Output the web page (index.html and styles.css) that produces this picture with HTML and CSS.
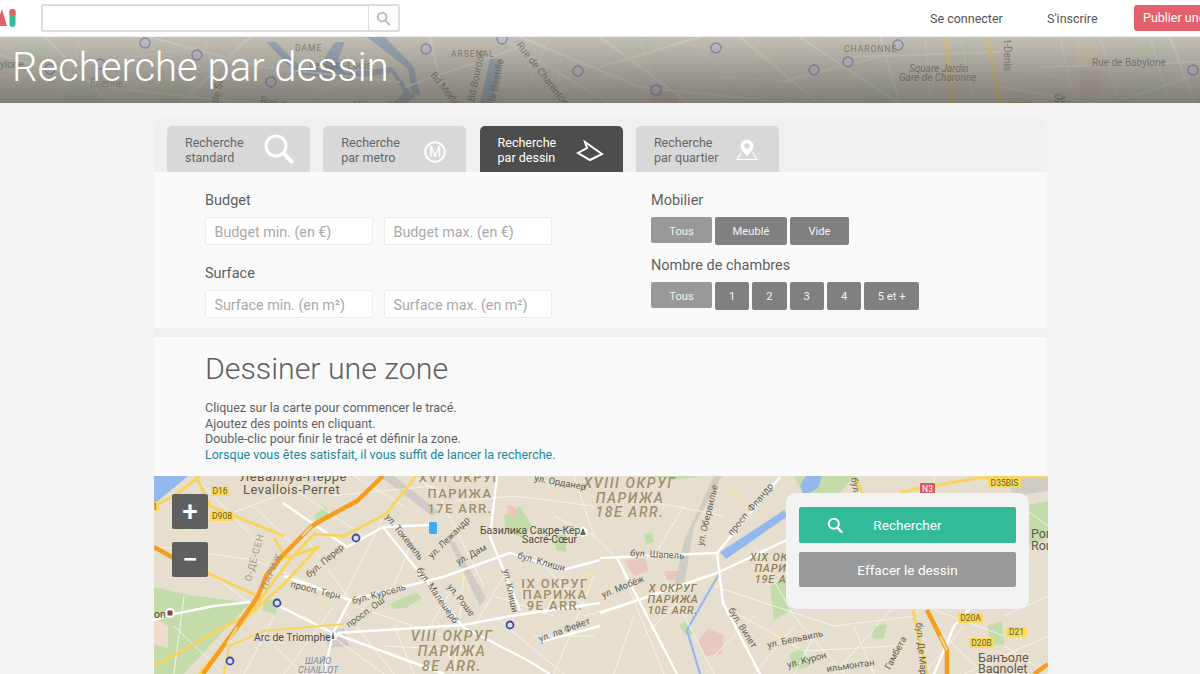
FILE: index.html
```html
<!DOCTYPE html>
<html lang="fr">
<head>
<meta charset="utf-8">
<title>Recherche par dessin</title>
<link rel="stylesheet" href="styles.css">
</head>
<body>
<header class="topbar">
  <div class="logo">
    <svg class="logo-svg" viewBox="0 0 16 36" width="16" height="36">
      <polygon class="logo-red" points="-4,26 2,9 7,26"/>
      <rect class="logo-green" x="9.5" y="9" width="6" height="18" rx="3"/>
      <path class="logo-red" d="M9.5 15v-3a3 3 0 0 1 6 0v3z"/>
    </svg>
  </div>
  <div class="searchbox">
    <div class="searchbox-field"></div>
    <div class="searchbox-btn">
      <svg viewBox="0 0 16 16" width="15" height="15"><circle class="ico-grey" cx="6.5" cy="6.5" r="4.6"/><line class="ico-grey" x1="10" y1="10" x2="14" y2="14.5"/></svg>
    </div>
  </div>
  <nav class="topnav">
    <a class="toplink link-login">Se connecter</a>
    <a class="toplink link-signup">S'inscrire</a>
    <a class="publish">Publier une annonce</a>
  </nav>
</header>

<section class="banner">
  <svg class="banner-map" viewBox="0 0 1200 67" width="1200" height="67" preserveAspectRatio="none">
    <rect width="1200" height="67" fill="#dcd7cb"/>
    <g fill="#d2dac4">
      <rect x="20" y="5" width="26" height="18"/><rect x="65" y="38" width="30" height="25"/><rect x="160" y="45" width="28" height="20"/>
      <rect x="1135" y="40" width="26" height="18"/><rect x="1140" y="5" width="24" height="14"/><rect x="870" y="40" width="34" height="27"/>
      <rect x="635" y="0" width="14" height="22"/><rect x="955" y="5" width="14" height="18"/>
    </g>
    <g fill="#e3dac4">
      <rect x="625" y="15" width="20" height="16"/><rect x="755" y="15" width="20" height="10"/><rect x="1075" y="5" width="22" height="22"/><rect x="1080" y="33" width="20" height="26" fill="#dccdc0"/>
      <rect x="650" y="48" width="28" height="19" fill="#dccdc0"/>
    </g>
    <path fill="#a9b7ca" d="M276 5 L300 30 L325 33 L325 20 L335 5 L345 5 L338 22 L345 36 L392 30 L410 55 L415 60 L404 67 L393 67 L404 55 L392 36 L345 42 L322 40 L296 36 L266 5 Z"/>
    <path fill="#a9b7ca" d="M367 0 L385 0 L414 30 L420 58 L412 58 L408 32 Z"/>
    <path fill="#a9b7ca" d="M490 22 L502 22 L492 67 L480 67 Z"/>
    <g class="bm-road">
      <path d="M0 18 L120 52 L260 67"/><path d="M150 0 L260 30 L400 45"/><path d="M45 0 L110 67"/><path d="M250 0 L180 67"/>
      <path d="M430 0 L445 67"/><path d="M500 0 L610 67"/><path d="M520 0 L640 50 L800 67"/><path d="M600 30 L700 0"/><path d="M600 0 L690 67"/>
      <path d="M740 0 L820 67"/><path d="M800 0 L900 67"/><path d="M780 45 L880 20"/><path d="M850 20 L1000 15"/><path d="M1040 30 L1200 25"/>
      <path d="M1170 0 L1195 67"/><path d="M1190 40 L1110 67"/><path d="M880 0 L900 67"/><path d="M1000 50 L1100 67"/><path d="M405 50 L520 10"/>
    </g>
    <g class="bm-thin">
      <path d="M0 40 L200 10"/><path d="M80 0 L60 67"/><path d="M205 0 L220 67"/><path d="M340 45 L300 67"/><path d="M550 0 L520 67"/><path d="M560 20 L560 67"/>
      <path d="M640 0 L660 67"/><path d="M700 15 L760 67"/><path d="M925 0 L930 67"/><path d="M960 0 L975 67"/><path d="M1000 30 L1060 40"/>
      <path d="M1060 0 L1075 67"/><path d="M1100 0 L1120 67"/><path d="M1150 0 L1170 67"/><path d="M720 40 L800 45"/>
    </g>
    <path class="bm-yellow" d="M946 0 L952 67"/><path class="bm-yellow" d="M987 0 L1000 67"/>
    <g class="bm-metro">
      <circle cx="145" cy="6" r="5"/><circle cx="197" cy="18" r="5"/><circle cx="100" cy="27" r="5"/><circle cx="50" cy="32" r="5"/><circle cx="271" cy="45" r="5"/>
      <circle cx="426" cy="12" r="5"/><circle cx="578" cy="34" r="5"/><circle cx="502" cy="2" r="5"/><circle cx="716" cy="11" r="5"/><circle cx="848" cy="25" r="5"/>
      <circle cx="814" cy="33" r="5"/><circle cx="656" cy="53" r="5"/><circle cx="898" cy="8" r="5"/><circle cx="1193" cy="33" r="5"/><circle cx="1140" cy="77" r="5"/>
    </g>
    <g class="bm-label">
      <text x="295" y="14" class="bm-caps">DAME</text>
      <text x="309" y="32">Île Saint-Louis</text>
      <text x="451" y="20" class="bm-caps">ARSENAL</text>
      <text x="354" y="72">Université</text>
      <text x="0" y="31">ylone</text>
      <text x="90" y="50" class="bm-faded">Étienne</text>
      <text transform="translate(430 38) rotate(52)">Bd Morland</text>
      <text transform="translate(474 65) rotate(-78)">Bd Bourdon</text>
      <text transform="translate(495 65) rotate(-78)">la Bastille</text>
      <text transform="translate(516 8) rotate(52)">Rue de Charenton</text>
      <text transform="translate(260 66) rotate(12)">Rue de</text>
      <text transform="translate(218 66) rotate(-78)">de Sa</text>
      <text x="844" y="15" class="bm-caps">CHARONNE</text>
      <text x="909" y="35" font-style="italic">Square Jardin</text>
      <text x="899" y="44" font-style="italic">Gare de Charonne</text>
      <text x="1092" y="29">Rue de Babylone</text>
      <text x="1054" y="65">Se</text>
      <text transform="translate(1004 3) rotate(90)">t-Denis</text>
      <rect x="1010" y="65" width="22" height="2" fill="#d6b850"/>
    </g>
  </svg>
  <div class="banner-shade"></div>
  <h1 class="banner-title">Recherche par dessin</h1>
</section>

<main class="page">
  <div class="tabs">
    <div class="tab">
      <span class="tab-label">Recherche<br>standard</span>
      <svg class="tab-icon" viewBox="0 0 30 32" width="30" height="32"><circle class="ico-w3" cx="12" cy="13" r="10"/><line class="ico-w4" x1="20" y1="21" x2="27.5" y2="28.5"/></svg>
    </div>
    <div class="tab">
      <span class="tab-label">Recherche<br>par metro</span>
      <svg class="tab-icon tab-icon-metro" viewBox="0 0 24 24" width="24" height="24"><circle class="ico-w2" cx="12" cy="12" r="9.7"/><text class="metro-m" x="12" y="17" text-anchor="middle">M</text></svg>
    </div>
    <div class="tab tab-active">
      <span class="tab-label">Recherche<br>par dessin</span>
      <svg class="tab-icon tab-icon-draw" viewBox="0 0 30 24" width="30" height="24"><polygon class="ico-w2" points="10,3 27,15 15,21 3,14 12,9"/></svg>
    </div>
    <div class="tab">
      <span class="tab-label">Recherche<br>par quartier</span>
      <svg class="tab-icon tab-icon-pin" viewBox="0 0 24 24" width="24" height="24"><path class="ico-fill" fill-rule="evenodd" d="M12 1.5a6.5 6.5 0 0 1 6.5 6.5c0 3.7-4 7-6.5 10.5C9.500 15 5.500 11.700 5.500 8A6.500 6.500 0 0 1 12 1.500zM12 5.300a2.700 2.700 0 1 0 0 5.400a2.700 2.700 0 0 0 0-5.400z"/><path class="ico-w1" d="M6.500 14.500 L2 21.500 H22 L17.500 14.500"/></svg>
    </div>
  </div>

  <section class="filters">
    <div class="filter-col filter-left">
      <h3 class="filter-title">Budget</h3>
      <div class="input-row">
        <input class="field" placeholder="Budget min. (en €)">
        <input class="field" placeholder="Budget max. (en €)">
      </div>
      <h3 class="filter-title filter-title-2">Surface</h3>
      <div class="input-row">
        <input class="field" placeholder="Surface min. (en m²)">
        <input class="field" placeholder="Surface max. (en m²)">
      </div>
    </div>
    <div class="filter-col filter-right">
      <h3 class="filter-title">Mobilier</h3>
      <div class="btn-row">
        <span class="opt opt-on opt-wide">Tous</span>
        <span class="opt opt-meuble">Meublé</span>
        <span class="opt opt-vide">Vide</span>
      </div>
      <h3 class="filter-title filter-title-3">Nombre de chambres</h3>
      <div class="btn-row">
        <span class="opt opt-on opt-wide">Tous</span>
        <span class="opt opt-num">1</span>
        <span class="opt opt-num">2</span>
        <span class="opt opt-num">3</span>
        <span class="opt opt-num">4</span>
        <span class="opt opt-more">5 et +</span>
      </div>
    </div>
  </section>

  <section class="intro">
    <h2 class="intro-title">Dessiner une zone</h2>
    <p class="intro-text">Cliquez sur la carte pour commencer le tracé.<br>Ajoutez des points en cliquant.<br>Double-clic pour finir le tracé et définir la zone.<br><span class="intro-hl">Lorsque vous êtes satisfait, il vous suffit de lancer la recherche.</span></p>
  </section>

  <section class="map">
    <svg class="map-svg" viewBox="0 0 894 198" width="894" height="198">
      <rect width="894" height="198" fill="#e6dfd0"/>
      <!-- parks -->
      <g fill="#c4dcaa">
        <polygon points="0,111 30,118 96,127 60,165 30,198 0,198"/>
        <polygon points="236,128 262,116 268,122 252,132 240,133"/>
        <polygon points="350,40 366,30 378,50 368,62 352,55"/>
        <polygon points="110,125 125,122 122,138 108,135"/>
        <polygon points="495,0 548,0 520,4"/>
        <polygon points="616,110 635,100 650,125 620,145"/>
        <polygon points="640,0 700,0 680,24 650,18"/>
        <polygon points="870,30 894,25 894,62 872,70"/>
        <polygon points="525,150 530,145 541,158 533,160"/>
        <polygon points="720,150 733,148 730,163 718,162"/>
        <polygon points="635,178 648,172 655,190 640,195"/>
        <polygon points="833,150 848,145 850,168 838,170"/>
        <polygon points="400,60 412,58 412,76 402,74"/>
        <polygon points="160,40 172,30 176,42 164,48"/>
        <polygon points="490,58 498,56 500,66 492,68"/>
      </g>
      <polygon fill="#f0dccb" points="0,142 14,150 14,172 0,168"/>
      <polygon fill="#e8c8c0" points="555,152 570,160 568,178 551,180 544,165"/>
      <polygon fill="#e8c8c0" points="470,85 490,80 495,95 480,100"/>
      <polygon fill="#e8c8c0" points="510,95 525,95 525,104 512,104"/>
      <polygon fill="#e8c8c0" points="352,30 360,30 365,38 355,40"/>
      <g fill="#ede2bd">
        <rect x="26" y="50" width="10" height="7"/><rect x="306" y="98" width="8" height="9"/><rect x="165" y="125" width="8" height="7"/>
        <rect x="556" y="100" width="12" height="9"/><rect x="600" y="90" width="14" height="14"/><rect x="700" y="50" width="10" height="8"/>
        <rect x="730" y="120" width="12" height="10"/><rect x="430" y="110" width="8" height="6"/><rect x="576" y="14" width="10" height="7"/>
        <rect x="860" y="120" width="12" height="9"/><rect x="428" y="95" width="14" height="10"/><rect x="620" y="155" width="8" height="8"/>
      </g>
      <g fill="#cfccc6">
        <polygon points="226,0 240,0 285,36 278,40"/>
        <polygon points="294,64 300,66 332,122 326,130"/>
        <polygon points="530,65 560,0 568,0 540,50 530,110 520,112"/>
        <polygon points="170,158 190,152 195,170 175,172"/>
        <polygon points="850,0 894,0 894,15 860,20"/>
      </g>
      <!-- water -->
      <g fill="#94b8ee">
        <polygon points="0,0 34,0 10,20 0,28"/>
        <polygon points="566,76 630,34 634,40 572,83"/>
        <polygon points="652,0 668,0 664,12 650,20 646,10"/>
      </g>
      <path class="m-canal" d="M566 96 L533 154 L546 198"/>
      <!-- minor streets -->
      <g class="m-thin">
        <path d="M0 70 L100 84 L196 124"/><path d="M40 0 L96 58"/><path d="M70 40 L150 10 L190 0"/><path d="M120 0 L210 60"/><path d="M175 20 L280 10"/>
        <path d="M150 60 L196 124"/><path d="M230 40 L190 120"/><path d="M280 10 L330 110"/><path d="M300 25 L360 20 L440 30"/>
        <path d="M180 130 L130 198"/><path d="M190 135 L240 198"/><path d="M240 150 L260 198"/>
        <path d="M200 130 L290 160 L300 198"/><path d="M310 100 L300 198"/><path d="M340 140 L410 198"/><path d="M400 40 L440 60 L470 90"/><path d="M380 80 L440 140"/>
        <path d="M420 0 L440 60"/><path d="M450 20 L520 30 L570 40"/><path d="M430 140 L530 110"/><path d="M470 100 L510 198"/><path d="M530 30 L500 80"/>
        <path d="M560 110 L620 130 L680 150 L760 140"/><path d="M600 70 L640 140 L690 198"/><path d="M640 150 L600 198"/><path d="M700 150 L720 198"/>
        <path d="M740 130 L680 198"/><path d="M770 130 L850 160"/><path d="M810 150 L770 198"/><path d="M850 140 L894 120"/><path d="M850 170 L894 198"/>
        <path d="M570 130 L650 175 L740 170"/><path d="M780 25 L780 0"/><path d="M860 25 L894 50"/><path d="M20 150 L70 198"/><path d="M260 0 L290 20"/>
        <path d="M120 140 L90 198"/><path d="M60 100 L100 130"/><path d="M150 140 L230 198"/><path d="M340 120 L400 140"/><path d="M440 100 L400 198"/>
        <path d="M510 100 L560 198"/><path d="M380 160 L440 160"/><path d="M810 198 L894 160"/>
        <path d="M200 0 L250 30"/><path d="M100 30 L140 70"/><path d="M260 60 L240 110"/><path d="M300 110 L270 160"/><path d="M350 100 L320 150"/>
        <path d="M410 100 L390 140"/><path d="M230 170 L330 175"/><path d="M120 170 L150 198"/><path d="M480 140 L460 198"/><path d="M530 120 L490 160"/>
        <path d="M600 140 L560 180"/><path d="M660 160 L640 198"/><path d="M780 150 L830 198"/><path d="M30 120 L20 198"/>
      </g>
      <!-- main streets -->
      <g class="m-road">
        <path d="M129 27 L193 71 L229 51 L276 49"/>
        <path d="M196 124 L289 101 L356 77 L409 94 L446 84"/>
        <path d="M196 124 L179 157 L290 198"/>
        <path d="M119 127 L179 157"/>
        <path d="M183 157 L309 149 L363 139 L446 127"/>
        <path d="M0 144 L20 138 L60 130 L96 126"/>
        <path d="M179 157 L170 198"/>
        <path d="M229 51 L309 151 L373 184 L396 198"/>
        <path d="M343 0 L336 61 L366 134"/>
        <path d="M446 137 L563 97 L633 64"/>
        <path d="M446 82 L563 77"/>
        <path d="M563 77 L569 127 L606 198"/>
        <path d="M563 77 L626 1"/>
        <path d="M463 82 L523 198"/>
        <path d="M130 100 L196 124"/>
        <path d="M386 166 L446 150"/>
        <path d="M836 110 L800 150 L780 198"/>
      </g>
      <!-- yellow -->
      <g class="m-yellow">
        <path d="M42 0 L56 30 L130 60"/>
        <path d="M53 97 L106 121"/>
        <path d="M0 190 L100 135 L130 108 L165 70"/>
        <path d="M45 198 L90 145 L105 125 L135 85 L160 58 L190 60 L232 38 L262 0"/>
        <path d="M120 62 L132 82 L165 71"/>
        <path d="M746 16 L823 2 L894 0"/>
        <path d="M759 134 L773 198"/>
        <path d="M0 30 L20 20 L46 0"/>
        <path d="M700 0 L712 24"/>
      </g>
      <path class="m-yellow-thin" d="M70 198 L75 170 L110 155 L190 148"/>
      <!-- orange -->
      <g class="m-orange">
        <path d="M49 198 L83 151 L104 120 L112 100 L129 79 L158 50 L168 44 L203 25 L229 0"/>
        <path d="M773 134 L793 174 L793 198"/>
        <path d="M0 71 L25 85"/>
        <path d="M880 198 L894 188"/>
      </g>
      <path class="m-orange-in" d="M73 168 L83 151"/>
      <path class="m-orange-in" d="M148 60 L158 50"/>
      <path class="m-orange-in" d="M786 160 L793 174"/>
      <!-- metro -->
      <g class="m-metro">
        <circle cx="202" cy="62" r="3.500"/><circle cx="123" cy="127" r="3.500"/><circle cx="356" cy="149" r="3.500"/><circle cx="76" cy="185" r="3.500"/>
      </g>
      <rect x="275" y="46" width="8" height="12" rx="1.500" fill="#3fa9f5"/>
      <circle cx="429" cy="56" r="5" fill="#fff"/><path d="M429 52 l3 7 h-6z" fill="#6d6658"/>
      <circle cx="179" cy="160" r="4" fill="#fff"/><path d="M179 155 l1.500 8 h-3z" fill="#6d6658"/>
      <circle cx="16" cy="137" r="5" fill="#fff"/><rect x="13.500" y="134.500" width="5" height="5" fill="#7a4a3f"/>
      <!-- shields -->
      <g class="m-shield">
        <rect x="57" y="11" width="18" height="9" rx="1"/><rect x="56" y="35" width="24" height="10" rx="1"/><rect x="-3" y="26" width="8" height="9" rx="1"/>
        <rect x="834" y="2" width="33" height="10" rx="1"/><rect x="804" y="137" width="25" height="10" rx="1"/><rect x="852" y="151" width="21" height="10" rx="1"/><rect x="815" y="162" width="25" height="10" rx="1"/>
      </g>
      <rect x="766" y="7" width="15" height="11" rx="1" fill="#d9555f"/>
      <g class="m-shield-t">
        <text x="66" y="18.300" text-anchor="middle">D16</text><text x="68" y="43" text-anchor="middle">D908</text><text x="1" y="33.500" text-anchor="middle">1</text>
        <text x="850.500" y="10" text-anchor="middle">D35BIS</text><text x="816.500" y="145" text-anchor="middle">D20A</text><text x="862.500" y="159" text-anchor="middle">D21</text><text x="827.500" y="170" text-anchor="middle">D20B</text>
      </g>
      <text class="m-shield-w" x="773.500" y="15.800" text-anchor="middle">N3</text>
      <!-- arrondissements -->
      <g class="m-arr" text-anchor="middle">
        <text x="306" y="6">XVII ОКРУГ</text><text x="306" y="22">ПАРИЖА</text><text x="306" y="37">17E ARR.</text>
        <text x="401" y="112">IX ОКРУГ</text><text x="401" y="123">ПАРИЖА</text><text x="401" y="134">9E ARR.</text>
        <text class="m-arr-big" x="298" y="165">VIII ОКРУГ</text><text class="m-arr-big" x="298" y="180">ПАРИЖА</text><text class="m-arr-big" x="298" y="195">8E ARR.</text>
        <text class="m-arr-big" x="476" y="12">XVIII ОКРУГ</text><text class="m-arr-big" x="476" y="27">ПАРИЖА</text><text class="m-arr-big" x="476" y="41">18E ARR.</text>
        <text x="519" y="116" class="m-arr-sm">X ОКРУГ</text><text x="519" y="127" class="m-arr-sm">ПАРИЖА</text><text x="519" y="138" class="m-arr-sm">10E ARR.</text>
        <text x="626" y="85" class="m-arr-sm">XIX ОКРУГ</text><text x="626" y="96" class="m-arr-sm">ПАРИЖА</text><text x="626" y="107" class="m-arr-sm">19E ARR.</text>
      </g>
      <!-- place names -->
      <text class="m-city" x="86" y="5">Леваллуа-Перре</text>
      <text class="m-city" x="89" y="18">Levallois-Perret</text>
      <text class="m-place" x="326" y="58">Базилика Сакре-Кёр</text>
      <text class="m-place" x="368" y="67">Sacré-Cœur</text>
      <text class="m-place" x="100" y="165">Arc de Triomphe</text>
      <text class="m-place" x="0" y="142">on</text>
      <text class="m-city-s" x="824" y="186">Банъоле</text>
      <text class="m-city-s" x="824" y="197">Bagnolet</text>
      <text class="m-city-s" x="877" y="62">Por</text>
      <text class="m-city-s" x="877" y="74">Ron</text>
      <text class="m-blue" x="151" y="188">ШАЙО</text>
      <text class="m-blue" x="144" y="197">CHAILLOT</text>
      <text class="m-grey" transform="translate(97 106) rotate(-75)">О-ДЕ-СЕН</text>
      <text class="m-grey" transform="translate(112 114) rotate(-65)">ПАРИЖ</text>
      <!-- street names -->
      <g class="m-street">
        <text transform="translate(380 5) rotate(10)">ул. Орданер</text>
        <text transform="translate(231 41) rotate(52)">ул. Токевиль</text>
        <text transform="translate(278 83) rotate(-45)">ул. Лежандр</text>
        <text transform="translate(304 89) rotate(-28)">ул. Дам</text>
        <text transform="translate(363 82) rotate(16)">бул. Клиши</text>
        <text transform="translate(155 102) rotate(-40)">бул. Перер</text>
        <text transform="translate(136 111) rotate(14)">просп. Терн</text>
        <text transform="translate(199 128) rotate(-15)">бул. Курсель</text>
        <text transform="translate(262 94) rotate(55)">бул. Малешерб</text>
        <text transform="translate(293 111) rotate(52)">ул. Роше</text>
        <text transform="translate(349 94) rotate(78)">ул. Клиши</text>
        <text transform="translate(195 152) rotate(-36)">просп. Ош</text>
        <text transform="translate(386 166) rotate(-20)">ул. ла Фейет</text>
        <text transform="translate(549 70) rotate(-76)">ул. Обервилье</text>
        <text transform="translate(578 60) rotate(-50)">просп. Фландр</text>
        <text transform="translate(476 80) rotate(3)">бул. Шапель</text>
        <text transform="translate(449 122) rotate(-22)">ул. Мобёж</text>
        <text transform="translate(574 134) rotate(58)">бул. Вилет</text>
        <text transform="translate(614 172) rotate(-12)">ул. Бельвиль</text>
        <text transform="translate(634 192) rotate(-15)">ул. Курон</text>
        <text transform="translate(673 196) rotate(-8)">ильмонтан</text>
        <text transform="translate(736 194) rotate(-62)">Гамбета</text>
        <text transform="translate(762 147) rotate(85)">бул. Де Мар</text>
        <text transform="translate(697 2) rotate(80)">бул.</text>
      </g>
    </svg>
    <div class="zoom-ctl">
      <button class="zoom-btn">+</button>
      <button class="zoom-btn">−</button>
    </div>
    <div class="map-panel">
      <button class="cta cta-search">
        <svg class="cta-ico" viewBox="0 0 16 16" width="16" height="16"><circle class="ico-w2" cx="6.800" cy="6.800" r="5"/><line class="ico-w2b" x1="10.500" y1="10.500" x2="14.500" y2="15"/></svg>
        Rechercher
      </button>
      <button class="cta cta-clear">Effacer le dessin</button>
    </div>
  </section>
</main>
</body>
</html>
```

FILE: styles.css
```css
* { box-sizing: border-box; }
html, body { margin: 0; height: 100%; overflow: hidden; }
body { background: #f3f3f3; font-family: Roboto, "Liberation Sans", sans-serif; color: #666; }

/* top bar */
.topbar { display: flex; align-items: center; height: 36px; background: #fff; white-space: nowrap; }
.logo { width: 41px; height: 36px; flex: none; }
.logo-svg { display: block; }
.logo-red { fill: #e4606d; }
.logo-green { fill: #33bb98; }
.searchbox { display: flex; flex: none; width: 359px; height: 28px; border: 2px solid #dcdcdc; border-radius: 2px; background: #fff; }
.searchbox-field { flex: 1; }
.searchbox-btn { width: 30px; display: flex; align-items: center; justify-content: center; border-left: 1px solid #dcdcdc; }
.ico-grey { fill: none; stroke: #bdbdbd; stroke-width: 2.200; stroke-linecap: round; }
.topnav { display: flex; align-items: center; flex: none; margin-left: 530px; font-size: 12.500px; }
.toplink { color: #555; }
.link-login { width: 117px; }
.link-signup { width: 87px; }
.publish { display: block; width: 66px; height: 26px; line-height: 26px; padding-left: 9px; overflow: hidden; background: #e4606d; color: #fff; border-radius: 3px 0 0 3px; }

/* banner */
.banner { position: relative; height: 67px; overflow: hidden; border-top: 1px solid #eee; }
.banner-map { position: absolute; left: 0; top: 0; display: block; }
.banner-shade { position: absolute; inset: 0; background: linear-gradient(to bottom, rgba(95, 95, 92, .2), rgba(70, 68, 64, .62)); }
.banner-title { position: relative; margin: 0; padding: 6px 0 0 12px; font-size: 40px; line-height: 50px; font-weight: 300; color: #fff; }
.bm-road { fill: none; stroke: #e6e4dc; stroke-width: 2.200; }
.bm-thin { fill: none; stroke: #e6e4dc; stroke-width: 1; }
.bm-yellow { fill: none; stroke: #efdb97; stroke-width: 4; }
.bm-metro circle { fill: #d6d5de; stroke: #9396b8; stroke-width: 1.300; }
.bm-label text { font-size: 10px; fill: #8b877c; }
.bm-label .bm-caps { letter-spacing: 1px; font-size: 8.500px; }
.bm-faded { opacity: .5; }

/* page */
.page { width: 893px; margin: 15px 0 0 154px; background: #f0f0f0; border-radius: 8px 8px 0 0; }
.tabs { display: flex; gap: 13.300px; padding: 8px 0 0 13px; height: 54px; }
.tab { width: 143px; height: 46px; display: flex; align-items: center; padding-left: 18px; background: #d8d8d8; border-radius: 5px 5px 0 0; font-size: 12.500px; line-height: 15px; color: #666; position: relative; }
.tab-label { display: block; padding-top: 2px; }
.tab-active { background: #4d4d4d; color: #fff; }
.tab-icon { position: absolute; right: 16px; top: 7px; }
.tab-icon-metro { right: 19px; top: 14px; }
.tab-icon-draw { right: 18px; top: 13px; }
.tab-icon-pin { right: 20px; top: 12px; }
.ico-w1 { fill: none; stroke: #fff; stroke-width: 1.200; }
.ico-w2 { fill: none; stroke: #fff; stroke-width: 2; }
.ico-w2b { fill: none; stroke: #fff; stroke-width: 2.600; stroke-linecap: round; }
.ico-w3 { fill: none; stroke: #fff; stroke-width: 3; }
.ico-w4 { fill: none; stroke: #fff; stroke-width: 4; stroke-linecap: round; }
.ico-fill { fill: #fff; }
.metro-m { fill: #fff; font-size: 14px; font-weight: 400; font-family: Roboto, sans-serif; }

/* filters */
.filters { display: flex; height: 156px; background: #fafafa; padding: 21px 0 0 51px; }
.filter-col { display: flex; flex-direction: column; }
.filter-left { width: 446px; }
.filter-title { margin: 0; font-size: 14.500px; line-height: 16px; font-weight: 400; color: #5f5f5f; }
.filter-title-2 { margin-top: 21px; }
.filter-title-3 { margin-top: 13px; }
.input-row { display: flex; gap: 11.500px; margin-top: 8px; }
.field { width: 167.500px; height: 28px; padding: 2px 0 0 8.500px; border: 1px solid #ececec; border-radius: 2px; background: #fff; font: 400 14.300px Roboto, sans-serif; color: #666; outline: none; }
.field::placeholder { color: #a9a9a9; opacity: 1; }
.btn-row { display: flex; gap: 3px; margin-top: 8px; align-items: flex-start; }
.opt { display: block; height: 28px; line-height: 29px; text-align: center; background: #808080; border-radius: 2px; color: #f2f2f2; font-size: 11.200px; }
.opt-on { height: 26px; background: #999; }
.opt-wide { width: 61px; }
.opt-meuble { width: 72px; }
.opt-vide { width: 59px; }
.opt-num { width: 34.300px; }
.opt-more { width: 55px; }

/* intro */
.intro { margin-top: 9px; height: 139px; background: #fafafa; padding: 13px 0 0 51px; }
.intro-title { margin: 0; font-size: 30.300px; line-height: 38px; font-weight: 300; color: #5f5f5f; }
.intro-text { margin: 12px 0 0; font-size: 12.500px; line-height: 15.700px; color: #5f5f5f; }
.intro-hl { color: #22869b; }

/* map */
.map { position: relative; width: 894px; height: 198px; overflow: hidden; }
.map-svg { display: block; }
.m-thin { fill: none; stroke: #f5f2ea; stroke-width: 1; }
.m-road { fill: none; stroke: #fff; stroke-width: 2.400; stroke-linejoin: round; }
.m-yellow { fill: none; stroke: #f8d45f; stroke-width: 3; stroke-linejoin: round; }
.m-yellow-thin { fill: none; stroke: #f8d45f; stroke-width: 2; }
.m-orange { fill: none; stroke: #f59d1e; stroke-width: 4.500; stroke-linejoin: round; }
.m-orange-in { fill: none; stroke: #e8d5a8; stroke-width: 2; }
.m-canal { fill: none; stroke: #94b8ee; stroke-width: 2.200; }
.m-metro circle { fill: #d9dcf2; stroke: #3c4a9e; stroke-width: 1.800; }
.m-shield rect { fill: #fbd85e; }
.m-shield-t text { font-size: 8.500px; fill: #6e5d20; font-family: Roboto, sans-serif; }
.m-shield-w { font-size: 8.500px; fill: #fff; font-family: Roboto, sans-serif; }
.m-arr text { font-size: 13px; font-weight: 500; letter-spacing: 1.400px; fill: #a08f6b; font-family: Roboto, sans-serif; }
.m-arr .m-arr-big { font-size: 14px; letter-spacing: 1.600px; font-style: italic; }
.m-arr .m-arr-sm { font-size: 11px; letter-spacing: .8px; font-style: italic; fill: #91805c; }
.m-city { font-size: 13px; letter-spacing: .5px; fill: #62594a; font-family: Roboto, sans-serif; }
.m-city-s { font-size: 12.500px; fill: #62594a; font-family: Roboto, sans-serif; }
.m-place { font-size: 10.500px; fill: #4d4a44; font-family: Roboto, sans-serif; }
.m-blue { font-size: 9px; font-style: italic; fill: #7a8ba6; font-family: Roboto, sans-serif; }
.m-grey { font-size: 9.500px; letter-spacing: .8px; fill: #9c9788; font-family: Roboto, sans-serif; }
.m-street text { font-size: 9.300px; fill: #625d52; font-family: Roboto, sans-serif; }

.zoom-ctl { position: absolute; left: 18px; top: 18px; display: flex; flex-direction: column; gap: 13px; }
.zoom-btn { width: 36px; height: 35px; padding: 0; border: 0; border-radius: 2px; background: #5f5f5f; color: #fff; font: 500 28px/32px Roboto, sans-serif; }
.map-panel { position: absolute; left: 632px; top: 17px; width: 243px; height: 116px; padding: 14px 13px 0 13px; display: flex; flex-direction: column; gap: 9px; background: #f3f3f3; border-radius: 10px; }
.cta { position: relative; display: block; width: 217px; height: 36px; padding: 0; border: 0; border-radius: 2px; color: #fff; font: 400 13.600px/35px Roboto, sans-serif; text-align: center; }
.cta-search { background: #33bb98; }
.cta-clear { background: #999; height: 35px; line-height: 34px; }
.cta-ico { position: absolute; left: 28px; top: 10px; }
```
